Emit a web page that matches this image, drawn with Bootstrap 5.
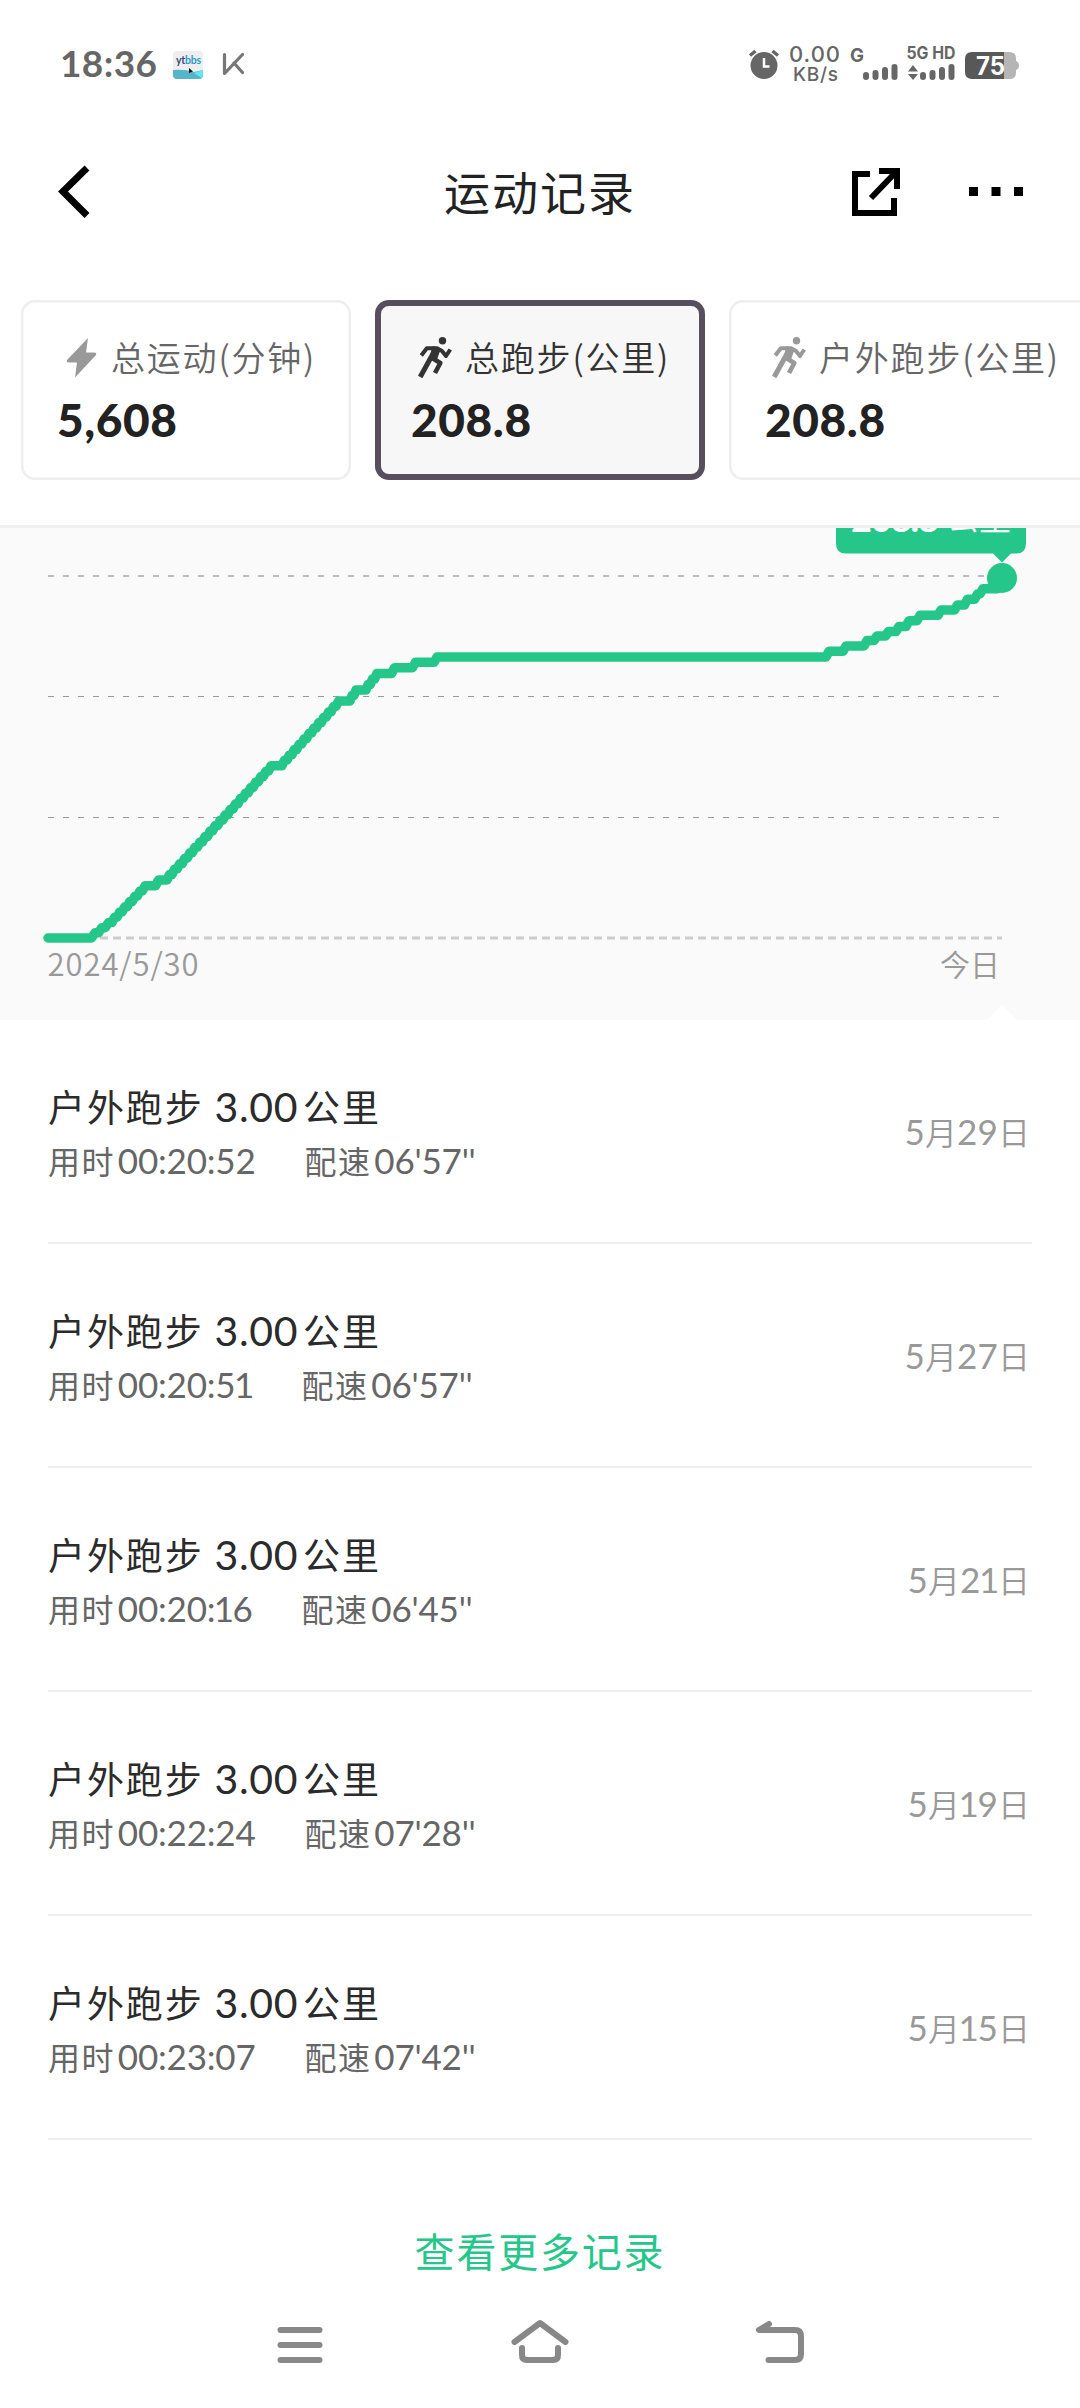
<!DOCTYPE html>
<html lang="zh-CN">
<head>
<meta charset="utf-8">
<meta name="viewport" content="width=device-width, initial-scale=1">
<title>运动记录</title>
<link href="https://cdn.jsdelivr.net/npm/bootstrap@5.3.0/dist/css/bootstrap.min.css" rel="stylesheet">
<style>
  body { font-family: "Noto Sans CJK SC", sans-serif; color: #222; background: #fff; width: 1080px; height: 2408px; overflow: hidden; }
  svg { display: block; flex-shrink: 0; }
  .lat { font-family: Lato, sans-serif; letter-spacing: 0; }
  .digit-one { margin: 0 -1.5px; }
  .statusbar { height: 120px; padding: 0 58px 0 60px; color: #666; }
  .clock { font: 700 37px/60px Lato, sans-serif; letter-spacing: .4px; width: 112px; margin-top: 33px; }
  .titlebar { height: 144px; padding: 0 57px 0 57px; }
  .page-title { font-size: 46px; line-height: 60px; letter-spacing: 2px; margin: 0 0 4px 2px; font-weight: 400; }
  .tabs-row { height: 261px; padding: 36px 0 0 21px; gap: 24px; }
  .stat { width: 330px; height: 180px; padding: 29px 0 0 36px; border-radius: 14px; box-shadow: inset 0 0 0 2.5px #eee; color: #666; flex: none; }
  .stat.wide { width: 386px; }
  .stat.chosen { background: #f7f7f7; box-shadow: inset 0 0 0 6px #584f5e; color: #333; }
  .stat-label { height: 56px; padding-left: 7px; gap: 13px; font-size: 34px; letter-spacing: 1.8px; font-weight: 350; line-height: 56px; }
  .stat-value { font: 900 46px/60px Lato, sans-serif; color: #222; letter-spacing: .6px; margin-top: 5px; }
  .chart { height: 495px; border-top: 3px solid #efefef; background: #fafafa; }
  .rec { height: 224px; border-bottom: 2px solid #eee; }
  .rec-title { font-size: 37px; letter-spacing: 1.9px; line-height: 50px; color: #2b2b2b; padding-top: 1px; }
  .rec-title .lat { font-size: 41px; letter-spacing: .6px; margin: 0 5px 0 11px; }
  .rec-sub { font-size: 32px; letter-spacing: 1.4px; line-height: 44px; color: #666; margin-top: 6px; }
  .rec-sub .lat { font-size: 35px; letter-spacing: -.2px; margin-left: 3px; }
  .rec-sub .gap-after { margin-right: 49px; }
  .rec-date { font-size: 32px; line-height: 44px; color: #999; font-weight: 350; padding-right: 2px; }
  .rec-date .lat { font-size: 35px; font-weight: 400; letter-spacing: .2px; }
  .more { height: 148px; font-size: 40px; letter-spacing: 1.8px; line-height: 60px; color: #24c789; text-decoration: none; padding-top: 80px; }
  .navbar-sys { height: 120px; }
</style>
</head>
<body class="d-flex flex-column">

<header class="statusbar d-flex align-items-start flex-shrink-0">
  <div class="clock">18:36</div>
  <svg width="72" height="120" viewBox="172 0 72 120">
    <defs><clipPath id="logo"><rect x="173" y="51" width="30" height="28" rx="4"/></clipPath></defs>
    <g clip-path="url(#logo)">
      <rect x="173" y="51" width="30" height="28" fill="#eee"/>
      <path d="M173 70Q184 69 194 72L203 70V80H173Z" fill="#56b5cb"/>
      <path d="M194 73L203 70V79Z" fill="#5fe6ee"/>
      <text x="176" y="64" font-family="Lato" font-weight="700" font-size="10.5" textLength="25" fill="#3c477e">yt<tspan fill="#2c9cc8">bbs</tspan></text>
      <path d="M189 68L193 71.500L189 73Z" fill="#111"/>
    </g>
    <path d="M224.500 54.500V73.500M242.500 54.500L225.500 72.500M234 63L242.500 72.500" fill="none" stroke="#777" stroke-width="3.200" stroke-linecap="round"/>
  </svg>
  <svg class="ms-auto" width="275" height="120" viewBox="748 0 275 120" fill="#666">
    <circle cx="765" cy="65.500" r="13.500"/>
    <path d="M751 55.500L756.500 51M779 55.500L773.500 51" stroke="#666" stroke-width="3.500"/>
    <path d="M765 58V66.500H770.500" fill="none" stroke="#fff" stroke-width="2.500"/>
    <g font-family="Inter, sans-serif" font-weight="500">
      <text x="790" y="62" font-size="22" textLength="51">0.00</text>
      <text x="794" y="81" font-size="19" textLength="45">KB/s</text>
      <text x="851" y="62" font-size="19" font-weight="700" textLength="14" lengthAdjust="spacingAndGlyphs">G</text>
      <text x="907.500" y="59" font-size="17" font-weight="700" textLength="49" lengthAdjust="spacingAndGlyphs">5G HD</text>
    </g>
    <g stroke="#666" stroke-width="6" stroke-linecap="round">
      <path d="M867 75V77M876.500 73V77M886 70V77M895.500 67V77M924 75V77M933.500 73V77M943 70V77M952.500 67V77"/>
    </g>
    <path d="M909 71.500L914 65L919 71.500ZM909 74L914 80L919 74Z"/>
    <path d="M1004 52H1010Q1017 52 1017 58V61Q1020 62 1020 65.500Q1020 69 1017 70V73Q1017 79 1010 79H1004Z" fill="#b5b5b5"/>
    <path d="M1005 52H973Q966 52 966 59V72Q966 79 973 79H1005Z" fill="#585858"/>
    <text x="977" y="75" font-family="Inter, sans-serif" font-weight="700" font-size="25" fill="#fff" textLength="29" lengthAdjust="spacingAndGlyphs">75</text>
  </svg>
</header>

<nav class="titlebar d-flex justify-content-between align-items-center flex-shrink-0">
  <svg width="171" height="60" viewBox="57 162 171 60"><path d="M87 168L63 191.500L87 215.500" fill="none" stroke="#000" stroke-width="7"/></svg>
  <h1 class="page-title">运动记录</h1>
  <svg width="173" height="60" viewBox="850 162 173 60">
    <path d="M870 174H855V213H894V198" fill="none" stroke="#000" stroke-width="6"/>
    <path d="M879 171H897V189M895 173L871 198" fill="none" stroke="#000" stroke-width="6"/>
    <path d="M969 187h9v9h-9zM991.500 187h9v9h-9zM1014 187h9v9h-9z"/>
  </svg>
</nav>

<section class="tabs-row d-flex flex-shrink-0 overflow-hidden">
  <div class="stat">
    <div class="stat-label d-flex align-items-center text-nowrap">
      <svg width="34" height="41" viewBox="0 0 34 41"><path d="M24 1L3 23Q2 25.500 5 25.500H13L11 40.500L32 18Q33 15.500 30 15.500H22Z" fill="#999"/></svg>
      <span>总运动(分钟)</span>
    </div>
    <div class="stat-value">5,608</div>
  </div>
  <div class="stat chosen">
    <div class="stat-label d-flex align-items-center text-nowrap">
      <svg width="34" height="41" viewBox="0 0 34 41"><g id="runner" fill="none" stroke="currentColor" stroke-linecap="butt" stroke-linejoin="round">
        <circle cx="24.500" cy="3.700" r="3.700" fill="currentColor" stroke="none"/>
        <path d="M3.300 18.500L8.800 11.200H19L24 14L28 19L32.300 12.500" stroke-width="4"/>
        <path d="M15 10L22 12L18 23L12 22Z" fill="currentColor" stroke-width="1.500"/>
        <path d="M16.500 14L2.200 40" stroke-width="5"/>
        <path d="M15 21.500L22.300 26L17 36" stroke-width="4.600"/>
      </g></svg>
      <span>总跑步(公里)</span>
    </div>
    <div class="stat-value">208.8</div>
  </div>
  <div class="stat wide">
    <div class="stat-label d-flex align-items-center text-nowrap">
      <svg width="34" height="41" viewBox="0 0 34 41" color="#999"><use href="#runner"/></svg>
      <span>户外跑步(公里)</span>
    </div>
    <div class="stat-value">208.8</div>
  </div>
</section>

<section class="chart flex-shrink-0">
  <svg width="1080" height="492" viewBox="0 528 1080 492">
    <g stroke-dasharray="6 9" stroke-width="2" stroke="#bbb">
      <path d="M48 576H1002"/><path d="M48 696.500H1002" stroke="#999" stroke-width="1"/><path d="M48 817.500H1002" stroke="#999" stroke-width="1"/>
    </g>
    <path d="M48 938H1002" stroke="#ccc" stroke-width="3" stroke-dasharray="8 5"/>
    <polyline id="trend" fill="none" stroke="#24c789" stroke-width="9.500" stroke-linecap="round" stroke-linejoin="round"/>
    <circle cx="1002" cy="578" r="15" fill="#24c789"/>
    <path d="M836 500H1026V543.500Q1026 553.500 1016 553.500H1011L1002 562.500L993 553.500H846Q836 553.500 836 543.500Z" fill="#24c789"/>
    <text y="532" fill="#fff"><tspan x="851" font-family="Lato" font-weight="700" font-size="36" textLength="88">208.8</tspan><tspan x="947" y="530" font-family="Noto Sans CJK SC" font-size="32">公里</tspan></text>
    <g font-family="Noto Sans CJK SC" fill="#999" font-weight="350">
      <text x="47.500" y="975.500" font-size="31" textLength="151">2024/5/30</text>
      <text x="1000" y="976" font-size="30" text-anchor="end">今日</text>
    </g>
    <path d="M987 1020L1002 1005L1017 1020Z" fill="#fff"/>
  </svg>
</section>

<main class="flex-shrink-0 px-5" id="records"></main>

<a class="more d-block text-center flex-shrink-0" href="#">查看更多记录</a>

<footer class="navbar-sys flex-shrink-0">
  <svg width="1080" height="120" viewBox="0 2288 1080 120" fill="none" stroke="#888" stroke-width="6" stroke-linecap="round" stroke-linejoin="round">
    <path d="M280.500 2330H319.500M280.500 2345H319.500M280.500 2360H319.500"/>
    <path d="M514.500 2342L540 2323L565.500 2342M522 2348V2355Q522 2360 527 2360H553Q558 2360 558 2355V2348"/>
    <path d="M769 2324L759 2330H795Q801 2330 801 2336V2354Q801 2360 795 2360H768.500"/>
  </svg>
</footer>

<script>
  // Rows of the record list: duration, pace, date
  const rows = [
    ["00:20:52", "06'57''", "29"],
    ["00:20:51", "06'57''", "27"],
    ["00:20:16", "06'45''", "21"],
    ["00:22:24", "07'28''", "19"],
    ["00:23:07", "07'42''", "15"]
  ];
  // The digit 1 is set tighter than the others
  const tight = s => s.replace(/1/g, '<span class="digit-one">1</span>');
  document.getElementById("records").innerHTML = rows.map(([t, p, d]) => `
    <article class="rec d-flex justify-content-between align-items-center text-nowrap">
      <div>
        <div class="rec-title">户外跑步<span class="lat">3.00</span>公里</div>
        <div class="rec-sub d-flex"><div class="gap-after">用时<span class="lat">${tight(t)}</span></div><div>配速<span class="lat">${p}</span></div></div>
      </div>
      <div class="rec-date"><span class="lat">5</span>月<span class="lat">${tight(d)}</span>日</div>
    </article>`).join("");

  // Cumulative distance; a third value of n splits the climb into n daily steps
  const trend = [
    [48,938],[91.600,938],[112,922.500,3],[147.500,885.700,7],[155.500,885.700],[158.500,880],[167,880],
    [273.500,765.700,21],[282,765.700],[341,701,12],[350,701],[358,690,2],[366,690],[379,673.500,3],
    [391.500,673.500],[394.500,667.700],[412.500,667.700],[415.500,662.300],[434,662.300],[437,657],
    [826,657],[829,651.300],[843,651.300],[846,646],[864,646],[867,640.500],[874,640.500],[877,636],
    [885.500,636],[888.500,631.500],[896,631.500],[899,626.500],[906,626.500],[909,620.700],[917,620.700],
    [920,615.300],[938,615.300],[941,610],[954.500,610],[957.500,605],[964.500,605],[967.500,599.300],
    [974.500,599.300],[977.500,594],[980,594],[983,588.700],[997,588.700],[1002,578]
  ];
  const pts = [];
  trend.forEach(([x, y, n], i) => {
    if (n) {
      const [px, py] = trend[i - 1], dx = (x - px) / n, dy = (y - py) / n;
      for (let k = 0; k < n; k++) {
        pts.push([px + dx * (k + .5), py + dy * (k + 1)], [px + dx * (k + 1), py + dy * (k + 1)]);
      }
    } else pts.push([x, y]);
  });
  document.getElementById("trend").setAttribute("points", pts.map(p => p.join(",")).join(" "));
</script>
<script src="https://cdn.jsdelivr.net/npm/bootstrap@5.3.0/dist/js/bootstrap.bundle.min.js"></script>
</body>
</html>
